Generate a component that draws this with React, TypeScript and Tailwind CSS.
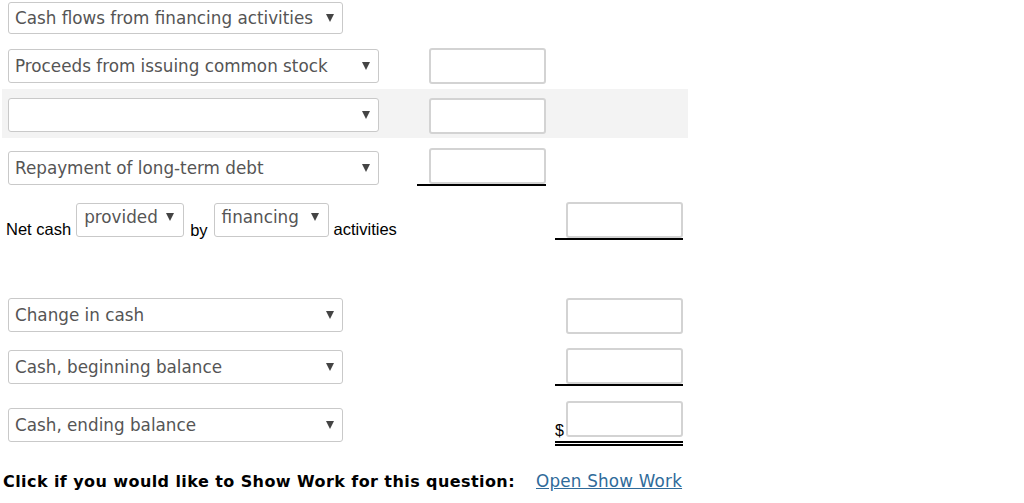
import React from "react";

const verdana = "font-['DejaVu_Sans','Verdana',sans-serif]";

function Arrow() {
  return (
    <svg width="8" height="8" viewBox="0 0 8 8" className="shrink-0">
      <polygon points="0,0 8,0 4,8" fill="#444" />
    </svg>
  );
}

function Select({ label, w, h = "h-[34px]" }: { label: string; w: string; h?: string }) {
  return (
    <div
      className={`${w} ${h} flex items-center justify-between rounded-[3px] border border-[#c9c9c9] bg-white pl-[6px] pr-[8px] shrink-0`}
    >
      <span className={`${verdana} text-[16.8px] text-[#555] whitespace-nowrap mt-[1px]`}>{label}</span>
      <Arrow />
    </div>
  );
}

function Box() {
  return <div className="w-[117px] h-[36px] rounded-[3px] border-2 border-[#d3d3d3] bg-white shrink-0" />;
}

export default function App() {
  return (
    <div className="w-[1024px] h-[503px] bg-white pl-[2px] overflow-hidden">
      <div className="w-[686px] flex flex-col">
        {/* heading select */}
        <div className="h-[44px] pl-[6px] pt-[2px]">
          <Select label="Cash flows from financing activities" w="w-[335px]" h="h-[32px]" />
        </div>

        <div className="h-[45px] pl-[6px] flex items-start">
          <div className="mt-[5px]">
            <Select label="Proceeds from issuing common stock" w="w-[371px]" />
          </div>
          <div className="ml-[50px] mt-[4px]">
            <Box />
          </div>
        </div>

        <div className="h-[49px] pl-[6px] flex items-start bg-[#f3f3f3]">
          <div className="mt-[9px]">
            <Select label="" w="w-[371px]" />
          </div>
          <div className="ml-[50px] mt-[9px]">
            <Box />
          </div>
        </div>

        <div className="h-[52px] pl-[6px] flex items-start">
          <div className="mt-[13px]">
            <Select label="Repayment of long-term debt" w="w-[371px]" />
          </div>
          <div className="ml-[38px] mt-[10px] pl-[12px] border-b-2 border-black">
            <Box />
          </div>
        </div>

        <div className="h-[108px] pl-[4px] flex items-start">
          <div className="mt-[13px] flex items-end font-['Liberation_Sans',Arial,sans-serif] text-[16.5px] text-black">
            <span className="mb-[-5px] mr-[5px]">Net cash</span>
            <div className="h-[34px] w-[108px] flex items-center justify-between rounded-[3px] border border-[#c9c9c9] bg-white pl-[7px] pr-[9px]">
              <span className={`${verdana} text-[16.8px] text-[#555] -mt-[4px]`}>provided</span>
              <div className="-mt-[6px]"><Arrow /></div>
            </div>
            <span className="mb-[-6px] ml-[6px] mr-[6px]">by</span>
            <div className="h-[34px] w-[115px] flex items-center justify-between rounded-[3px] border border-[#c9c9c9] bg-white pl-[7px] pr-[9px]">
              <span className={`${verdana} text-[16.8px] text-[#555] -mt-[4px]`}>financing</span>
              <div className="-mt-[6px]"><Arrow /></div>
            </div>
            <span className="mb-[-5px] ml-[5px]">activities</span>
          </div>
          <div className="ml-auto mt-[12px] mr-[5px] pl-[11px] border-b-2 border-black">
            <Box />
          </div>
        </div>

        <div className="h-[50px] pl-[6px] flex items-start">
          <Select label="Change in cash" w="w-[335px]" />
          <div className="ml-auto mr-[5px]">
            <Box />
          </div>
        </div>

        <div className="h-[51px] pl-[6px] flex items-start">
          <div className="mt-[2px]">
            <Select label="Cash, beginning balance" w="w-[335px]" />
          </div>
          <div className="ml-auto mr-[5px] pl-[11px] border-b-2 border-black">
            <Box />
          </div>
        </div>

        <div className="h-[60px] pl-[6px] flex items-start">
          <div className="mt-[9px]">
            <Select label="Cash, ending balance" w="w-[335px]" />
          </div>
          <div className="ml-auto mr-[5px] mt-[2px] flex items-end pb-[4px] border-b-[5px] border-double border-black">
            <span className="font-['Liberation_Sans',Arial,sans-serif] text-[16px] text-black leading-none w-[11px] mb-[-2px]">$</span>
            <Box />
          </div>
        </div>

        <div className="pl-[1px] mt-[10px] flex items-center">
          <span className={`${verdana} tracking-[0.42px] text-[16px] font-bold text-black`}>
            Click if you would like to Show Work for this question:
          </span>
          <a
            href="#"
            className="ml-[21px] font-['DejaVu_Sans','Verdana',sans-serif] text-[16.8px] tracking-[0.2px] text-[#2f6b9a] underline"
          >
            Open Show Work
          </a>
        </div>
      </div>
    </div>
  );
}
